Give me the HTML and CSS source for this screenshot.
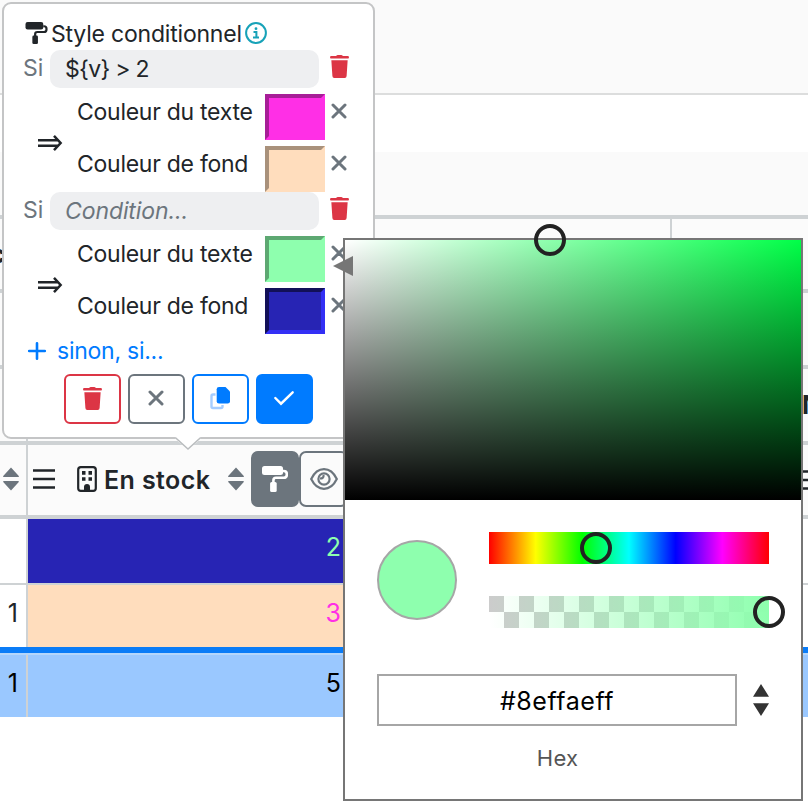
FILE: index.html
```html
<!DOCTYPE html>
<html lang="fr">
<head>
<meta charset="utf-8">
<title>Style conditionnel</title>
<link rel="stylesheet" href="styles.css">
</head>
<body>
<svg class="defs" aria-hidden="true">
  <symbol id="trash" viewBox="0 0 18 22"><path d="M5.600 1 6.300.4Q6.600 0 7.200 0h3.600q.6 0 .9.4l.7.6H17q1 0 1 1v.7q0 .6-.7.6H.7Q0 3.300 0 2.700V2q0-1 1-1zM1.200 5h15.600l-1 15.200q-.1 1.800-1.800 1.800H4q-1.700 0-1.800-1.800z"/></symbol>
  <symbol id="cross" viewBox="0 0 16 16"><path d="M2 2 14 14M14 2 2 14" fill="none" stroke="currentColor" stroke-width="3" stroke-linecap="round"/></symbol>
  <symbol id="roller" viewBox="0 0 26 26"><path d="M2.500 0h16Q21 0 21 2.500v4Q21 9 18.500 9h-16Q0 9 0 6.500v-4Q0 0 2.500 0z"/><path d="M21 5h.8q3 0 3 3v.8q0 3-3 3H14q-2.600 0-2.600 2.600V18" fill="none" stroke="currentColor" stroke-width="2.600"/><rect x="8.100" y="16" width="6.600" height="10" rx="1.600"/></symbol>
  <symbol id="sort" viewBox="0 0 16 24"><path d="M8 .5 15.800 9q.4 1-.8 1H1q-1.200 0-.8-1zM8 23.500 15.800 15q.4-1-.8-1H1q-1.200 0-.8 1z"/></symbol>
  <symbol id="menu" viewBox="0 0 22 20"><path d="M0 1.500h22M0 10h22M0 18.500h22" stroke="currentColor" stroke-width="2.500"/></symbol>
</svg>

<main class="app">
  <div class="topbar"></div>
  <div class="spacer"></div>
  <div class="toolbar"></div>
  <div class="head group"><div class="cell edge"><b class="clip">c</b></div><div class="cell wide"></div><div class="cell"></div></div>
  <div class="head"><div class="cell edge"></div></div>
  <div class="head"><div class="cell edge"></div><b class="next">N</b></div>
  <div class="head titles">
    <div class="cell edge"><svg class="sort"><use href="#sort"/></svg></div>
    <div class="cell column">
      <svg class="menu"><use href="#menu"/></svg>
      <svg class="building" viewBox="0 0 20 26"><rect class="line" x="1.200" y="1.200" width="17.600" height="23.600" rx="2.600" fill="none" stroke="currentColor" stroke-width="2.200"/><path d="M5 5h3.500v3.800H5zM11.500 5H15v3.800h-3.500zM5 11.300h3.500v3.500H5zM11.500 11.300H15v3.500h-3.500zM7 25v-4a3 3 0 0 1 6 0v4z"/></svg>
      <b>En stock</b>
      <svg class="sort"><use href="#sort"/></svg>
      <span class="tool active"><svg><use href="#roller"/></svg></span>
      <span class="tool"><svg class="eye" viewBox="0 0 28 22"><g fill="none" stroke="currentColor" stroke-width="2.200"><path d="M1.200 11Q6 1.200 14 1.200T26.800 11Q22 20.800 14 20.800T1.200 11z"/><circle cx="14" cy="11" r="5.600"/><path d="M13.500 7q.5 3.500-3.500 3.500" stroke-width="2.200"/></g></svg></span>
    </div>
    <svg class="menu last"><use href="#menu"/></svg>
  </div>
  <div class="row first"><div class="cell edge"></div><div class="value navy">2</div><div class="rest"></div></div>
  <div class="row second"><div class="cell edge">1</div><div class="value peach">3</div><div class="rest"></div></div>
  <div class="row selected"><div class="cell edge">1</div><div class="value">5</div><div class="rest"></div></div>
</main>

<section class="popover">
  <header class="title"><svg class="rollicon"><use href="#roller"/></svg><span class="heading">Style conditionnel</span><svg class="info" viewBox="0 0 22 22"><circle cx="11" cy="11" r="9.900" fill="none" stroke="currentColor" stroke-width="2"/><circle cx="11" cy="6.700" r="1.400"/><path d="M8.500 10h2.900v5.500M8 15.600h6" fill="none" stroke="currentColor" stroke-width="2"/></svg></header>
  <div class="rule">
    <div class="condition"><span class="if">Si</span><span class="input code">${v} &gt; 2</span><svg class="trash"><use href="#trash"/></svg></div>
    <div class="effects">
      <span class="implies"><svg viewBox="0 0 24 16"><path d="M0 5.200h20M0 10.800h20M16 .9 22.600 8 16 15.100" fill="none" stroke="currentColor" stroke-width="2.500"/></svg></span>
      <div class="styles">
        <div class="style"><span class="name">Couleur du texte</span><span class="swatch pink"></span><svg class="cross"><use href="#cross"/></svg></div>
        <div class="style"><span class="name">Couleur de fond</span><span class="swatch sand"></span><svg class="cross"><use href="#cross"/></svg></div>
      </div>
    </div>
  </div>
  <div class="rule">
    <div class="condition"><span class="if">Si</span><span class="input empty">Condition...</span><svg class="trash"><use href="#trash"/></svg></div>
    <div class="effects">
      <span class="implies"><svg viewBox="0 0 24 16"><path d="M0 5.200h20M0 10.800h20M16 .9 22.600 8 16 15.100" fill="none" stroke="currentColor" stroke-width="2.500"/></svg></span>
      <div class="styles">
        <div class="style"><span class="name">Couleur du texte</span><span class="swatch mint"></span><svg class="cross"><use href="#cross"/></svg></div>
        <div class="style"><span class="name">Couleur de fond</span><span class="swatch indigo"></span><svg class="cross"><use href="#cross"/></svg></div>
      </div>
    </div>
  </div>
  <div class="more"><svg viewBox="0 0 18 18"><path d="M9 1.200v15.600M1.200 9h15.600" stroke="currentColor" stroke-width="2.600" stroke-linecap="round"/></svg><span>sinon, si...</span></div>
  <footer class="actions">
    <span class="btn danger"><svg class="trash"><use href="#trash"/></svg></span>
    <span class="btn neutral"><svg class="cross"><use href="#cross"/></svg></span>
    <span class="btn primary"><svg class="copy" viewBox="0 0 20 22"><path d="M5.500 7.500H3q-1.500 0-1.500 1.500v10.500q0 1.500 1.500 1.500h8q1.500 0 1.500-1.500V18" fill="none" stroke="#a5cdff" stroke-width="2.400"/><path d="M9 0h6.500L20 4.500v9.700q0 2.300-2.300 2.300H9q-2.300 0-2.300-2.300V2.300Q6.700 0 9 0z"/></svg></span>
    <span class="btn filled"><svg class="check" viewBox="0 0 20 14"><path d="M1.300 7 7 12.700 18.700 1.300" fill="none" stroke="currentColor" stroke-width="2.400" stroke-linecap="round"/></svg></span>
  </footer>
  <svg class="tail" viewBox="0 0 26 13"><path d="M0 0h26v2L13 12 0 2z" fill="#fff"/><path d="M0 1h.8L13 12 25.200 1h.8" fill="none" stroke="#b9bcbe" stroke-width="1.400"/></svg>
</section>

<aside class="picker">
  <div class="shade"></div>
  <div class="controls">
    <span class="sample"></span>
    <div class="sliders"><div class="hue"><i class="ring"></i></div><div class="alpha"><i class="ring"></i></div></div>
  </div>
  <div class="entry">
    <div class="field"><span class="hex">#8effaeff</span><span class="mode">Hex</span></div>
    <svg class="switch" viewBox="0 0 16 32"><path d="M8 0 16 12.700H0zM0 19.300h16L8 32z"/></svg>
  </div>
  <i class="ring point"></i>
  <i class="pointer"></i>
</aside>
</body>
</html>
```
FILE: styles.css
```css
* { box-sizing: border-box; }
body { margin: 0; width: 808px; height: 806px; overflow: hidden; position: relative; background: #fff; color: #212529; font: 25px/1.2 Inter, "Liberation Sans", sans-serif; }
svg { fill: currentColor; display: block; flex: none; overflow: visible; }
.defs { position: absolute; width: 0; height: 0; }

.topbar { height: 95px; background: #fafafa; border-bottom: 2px solid #dcdddd; }
.spacer { height: 57px; }
.toolbar { height: 67px; background: #fafafa; border-bottom: 4px solid #ced2d4; }
.head { display: flex; height: 76px; background: #fbfbfb; border-bottom: 4px solid #ced2d4; overflow: hidden; }
.head.group { height: 74px; }
.head.titles { height: 74px; }
.cell.edge { flex: none; width: 28px; border-right: 2px solid #ced2d4; display: flex; align-items: center; }
.cell.wide { width: 644px; border-right: 2px solid #ced2d4; }
.clip { width: 5px; display: flex; justify-content: flex-end; }
.next { flex: none; width: 6px; margin: auto 0 auto auto; }
.titles .edge { padding-left: 3px; }
.sort { width: 16px; height: 24px; color: #6c757d; }
.edge .sort { margin-bottom: 3px; }
.menu { width: 22px; height: 20px; }
.menu.last { margin: 25px -17px 0 auto; }
.column { display: flex; align-items: center; width: 330px; padding: 0 0 3px 5px; }
.column > .building { margin-top: 1px; }
.building { width: 20px; height: 26px; margin-left: 22px; }
.building .line { fill: none; }
.column b { font-weight: 600; margin-left: 7px; margin-top: 2px; width: 124px; white-space: nowrap; letter-spacing: .4px; }
.tool { flex: none; width: 49px; height: 56px; border: 2px solid #6c757d; border-radius: 7px; display: grid; place-items: center; color: #6c757d; }
.tool.active { margin-left: 7px; background: #6c757d; color: #fff; width: 48px; }
.tool svg { width: 26px; height: 26px; }
.tool .eye { width: 28px; height: 22px; }

.row { display: flex; height: 66px; border-bottom: 2px solid #ced2d4; }
.row .edge { justify-content: flex-end; padding: 0 8px 6px 0; }
.value { width: 315px; padding: 0 2px 6px 0; display: flex; align-items: center; justify-content: flex-end; }
.row.first .value { padding-bottom: 9px; }
.navy { background: #2724b4; color: #8effae; }
.peach { background: #ffddbd; color: #ff2fe6; }
.row.second { height: 68px; border-bottom: 6px solid #0a7cf7; }
.row.selected { height: 64px; border: 0; border-top: 2px solid #b4d6fb; background: #9ac8ff; color: #000; }

.popover { position: absolute; left: 2px; top: 2px; width: 373px; height: 437px; padding-top: 12px; background: #fff; border: 2px solid #c4c5c6; border-radius: 9px; font-size: 23px; }
.title { display: flex; align-items: center; height: 34px; padding: 0 0 0 21px; }
.rollicon { width: 23px; height: 22px; }
.heading { width: 190px; margin: 4px 4px 0 3px; white-space: nowrap; letter-spacing: -.2px; }
.info { width: 22px; height: 22px; color: #17a2b8; }
.condition { position: relative; display: flex; align-items: center; height: 38px; padding-left: 19px; }
.if { width: 27px; color: #6c757d; margin-top: -1px; }
.input { width: 269px; height: 38px; padding: 6px 15px; background: #eeeff1; border-radius: 10px; }
.code { letter-spacing: -.7px; }
.empty { color: #6c757d; font-style: italic; letter-spacing: -.1px; }
.trash { width: 19px; height: 23px; color: #dc3545; }
.condition .trash { margin: -5px 0 0 11px; }
.effects { display: flex; height: 104px; }
.implies { width: 73px; padding: 47px 0 0 34px; }
.implies svg { width: 24px; height: 16px; }
.style { display: flex; height: 52px; padding-top: 6px; align-items: flex-start; }
.name { width: 188px; padding-top: 5px; white-space: nowrap; letter-spacing: -.27px; }
.swatch { width: 60px; height: 46px; border: 4px solid; }
.pink { background: #ff2fe6; border-color: #a71e97 #ff2fe6 #ff2fe6 #a71e97; }
.sand { background: #ffddbd; border-color: #a9917b #ffddbd #ffddbd #a9917b; }
.mint { background: #8effae; border-color: #5da872 #8effae #8effae #5da872; }
.indigo { background: #2724b4; border-color: #121058 #332ff5 #332ff5 #121058; }
.cross { width: 16px; height: 16px; color: #6c757d; }
.style .cross { margin: 9px 0 0 6px; }
.more { display: flex; align-items: center; gap: 11px; height: 34px; padding-left: 24px; color: #007bff; letter-spacing: -.25px; }
.more svg { width: 18px; height: 18px; margin-top: -1px; }
.more span { margin-top: 2px; }
.actions { display: flex; gap: 7px; padding: 6px 0 0 60px; }
.btn { width: 57px; height: 50px; border: 2px solid; border-radius: 6px; display: grid; place-items: center; padding: 0 1px 2px 0; }
.danger { color: #dc3545; }
.neutral { color: #6c757d; }
.primary { color: #007bff; }
.filled { color: #fff; background: #007bff; border-color: #007bff; }
.copy { width: 20px; height: 22px; }
.check { width: 20px; height: 14px; }
.tail { position: absolute; left: 171px; top: 433px; width: 26px; height: 13px; }

.picker { position: absolute; left: 343px; top: 238px; width: 460px; height: 563px; background: #fff; border: 2px solid #767676; color: #000; }
.shade { height: 260px; background: linear-gradient(to top, #000, transparent), linear-gradient(to right, #fff, #00ff47); }
.controls { display: flex; padding: 32px; gap: 32px; height: 160px; }
.sample { width: 80px; height: 80px; margin-top: 8px; border-radius: 50%; background: #8effae; border: 2px solid #a6a6a6; }
.sliders { width: 280px; display: grid; gap: 32px; grid-template-rows: 32px 32px; }
.hue, .alpha { position: relative; }
.hue { background: linear-gradient(to right, red, #ff0, lime, cyan, blue, magenta, red); }
.alpha { background: linear-gradient(to right, rgba(142,255,174,0), #8effae), conic-gradient(#fff 25%, #ccc 0 50%, #fff 0 75%, #ccc 0) 0 0 / 30px 32px; }
.ring { position: absolute; width: 32px; height: 32px; border: 4px solid #222; border-radius: 50%; left: 91px; top: 0; }
.alpha .ring { left: 264px; }
.ring.point { left: 189px; top: -16px; }
.pointer { position: absolute; left: -12px; top: 16px; border: 10px solid transparent; border-left: 0; border-right: 20px solid #767676; }
.entry { display: flex; padding: 14px 32px; gap: 16px; }
.field { width: 360px; text-align: center; }
.hex { display: block; height: 52px; border: 2px solid #a6a6a6; line-height: 50px; letter-spacing: .55px; }
.mode { display: block; font-size: 22px; margin-top: 19px; padding-left: 1px; color: #555; letter-spacing: .2px; }
.switch { width: 16px; height: 32px; margin-top: 10px; color: #333; }
```
